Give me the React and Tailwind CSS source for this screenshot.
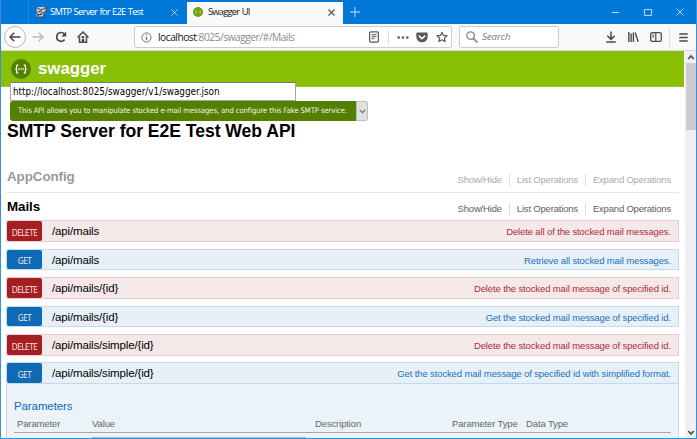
import React from 'react';

const operations = [
  { method: 'DELETE', path: '/api/mails', note: 'Delete all of the stocked mail messages.', size: 'h-[22px] mb-[7px]' },
  { method: 'GET', path: '/api/mails', note: 'Retrieve all stocked mail messages.', size: 'h-[21px] mb-[7px]' },
  { method: 'DELETE', path: '/api/mails/{id}', note: 'Delete the stocked mail message of specified id.', size: 'h-[22px] mb-[7px]' },
  { method: 'GET', path: '/api/mails/{id}', note: 'Get the stocked mail message of specified id.', size: 'h-[21px] mb-[7px]' },
  { method: 'DELETE', path: '/api/mails/simple/{id}', note: 'Delete the stocked mail message of specified id.', size: 'h-[22px] mb-[6px]' },
  { method: 'GET', path: '/api/mails/simple/{id}', note: 'Get the stocked mail message of specified id with simplified format.', size: 'h-[22px]' },
];

function Operation({ method, path, note, size }) {
  const del = method === 'DELETE';
  return (
    <div className={`flex shrink-0 items-stretch border pr-[7px] ${size} ${del ? 'border-[#edcacd] bg-[#f5e8e8]' : 'border-[#c3daee] bg-[#e7f0f7]'}`}>
      <div className={`flex w-[35px] items-center justify-center rounded-[2px] pt-[4px] font-['Open_Sans',sans-serif] text-[8.2px] leading-none tracking-[-0.45px] text-[#f6e8e8] ${del ? 'bg-[#a41e22]' : 'bg-[#0f6ab4]'}`}>{method}</div>
      <div className="ml-[10px] flex items-center pt-[2px] text-[11.5px] leading-none tracking-[-0.15px] text-black">{path}</div>
      <div className={`ml-auto flex items-center pt-[2px] text-[9.5px] leading-none tracking-[-0.13px] ${del ? 'text-[#b02c3a]' : 'text-[#2270bd]'}`}>{note}</div>
    </div>
  );
}

function Links({ className }) {
  return (
    <div className={`ml-auto flex items-center text-[9.5px] leading-none tracking-[-0.19px] ${className}`}>
      <span>Show/Hide</span>
      <span className="mx-[7px] h-[12px] w-px bg-[#dddddd]" />
      <span>List Operations</span>
      <span className="mx-[7px] h-[12px] w-px bg-[#dddddd]" />
      <span>Expand Operations</span>
    </div>
  );
}

function SwaggerMark({ className, fill, ink }) {
  return (
    <svg className={className} viewBox="0 0 20 20" fill="none">
      <circle cx="10" cy="10" r="10" fill={fill} />
      <path d="M7.2 5.8c-1.8 0-1.5 1-1.5 2.4S5 10 4.4 10c.6 0 1.3.5 1.3 1.8s-.3 2.4 1.5 2.4M12.8 5.8c1.8 0 1.5 1 1.5 2.4s.7 1.8 1.3 1.8c-.6 0-1.3.5-1.3 1.8s.3 2.4-1.5 2.4" stroke={ink} strokeWidth="1.3" />
      <path d="M7.3 10h1.3M9.4 10h1.3M11.5 10h1.3" stroke={ink} strokeWidth="1.4" />
    </svg>
  );
}

function TabBar() {
  return (
    <div className="flex h-[24px] shrink-0 bg-[#0078d7] font-['Open_Sans',sans-serif] text-[9.4px] leading-none">
      <div className="w-[27px]" />
      <div className="flex w-[159px] items-center border-l border-[#1c88dd] pl-[6px] pr-[9px] text-white">
        <svg className="h-[12px] w-[12px] shrink-0" viewBox="0 0 12 12" fill="none">
          <path d="M1 1h10v4.5l-3 2.5v3H1.5V8L3 6 1 5z" fill="#c9cdd0" />
          <path d="M1.5 1.5 6 4l5-2.5M3 6l4-1M1.5 10.5 7 7l4-1.5M2 8.5h5M9 8v3H2M1 1v4M11 1v5" stroke="#3c454b" strokeWidth="1" />
        </svg>
        <span className="ml-[3px] whitespace-nowrap font-medium tracking-[-0.74px] [word-spacing:0.5px]">SMTP Server for E2E Test</span>
        <svg className="ml-auto h-[7px] w-[7px]" viewBox="0 0 7 7"><path d="m.5.5 6 6m0-6-6 6" stroke="#a9d2f3" /></svg>
      </div>
      <div className="mt-[2px] flex w-[156px] items-center bg-[#f9f9fa] pb-[2px] pl-[6px] pr-[8px] text-[#151515]">
        <SwaggerMark className="h-[10px] w-[10px]" fill="#6b9c0a" ink="#d9edb5" />
        <span className="ml-[5px] font-medium tracking-[-0.82px] [word-spacing:1px]">Swagger UI</span>
        <svg className="ml-auto h-[7px] w-[7px]" viewBox="0 0 7 7"><path d="m.5.5 6 6m0-6-6 6" stroke="#5c5c5c" strokeWidth="1.3" /></svg>
      </div>
      <svg className="ml-[7px] mt-[7px] h-[10px] w-[10px]" viewBox="0 0 10 10"><path d="M5 0v10M0 5h10" stroke="#8fc4ef" strokeWidth="1.3" /></svg>
      <div className="ml-auto flex items-center pr-[12px]">
        <svg className="h-[8px] w-[72px]" viewBox="0 0 72 8" fill="none" stroke="#b9daf5">
          <path d="M0 4.5h7M64.5.5l7 7m0-7-7 7" />
          <path d="M32.5 1.5h7v6h-7z" />
        </svg>
      </div>
    </div>
  );
}

function Toolbar() {
  return (
    <div className="flex h-[27px] shrink-0 items-center border-b border-[#dedee0] bg-[#f9f9fa] pl-[3px] font-['Open_Sans',sans-serif] text-[#4a4a4c]">
      <div className="flex h-[22px] w-[22px] items-center justify-center rounded-full border border-[#b9b9ba] bg-[#fdfdfd]">
        <svg className="h-[10px] w-[12px]" viewBox="0 0 12 10" fill="none" stroke="currentColor" strokeWidth="1.6"><path d="M11.5 5H1.2M5.2.7 1 5l4.2 4.3" /></svg>
      </div>
      <svg className="ml-[6px] h-[10px] w-[12px] text-[#b9b9ba]" viewBox="0 0 12 10" fill="none" stroke="currentColor" strokeWidth="1.5"><path d="M.5 5h10.3M6.8.7 11 5 6.8 9.3" /></svg>
      <svg className="ml-[11px] h-[12px] w-[12px]" viewBox="0 0 12 12" fill="none"><path d="M9.6 8.5A4.4 4.4 0 1 1 9 2.6l1 1" stroke="currentColor" strokeWidth="1.7" /><path d="M11.2.4v5H6.3z" fill="currentColor" /></svg>
      <svg className="ml-[10px] h-[12px] w-[12px]" viewBox="0 0 12 12" fill="none"><path d="M.5 6.5 6 1l5.5 5.5" stroke="currentColor" strokeWidth="1.5" /><path d="M2.5 5.5v5.7h7V5.5M6 11V7.6" stroke="currentColor" strokeWidth="1.5" /><path d="M4.7 5h2.6v2H4.7zM4.7 8.2h2.6V11H4.7z" fill="currentColor" /></svg>
      <div className="ml-[45px] flex h-[22px] w-[318px] items-center rounded-[2px] border border-[#cccccd] bg-white pl-[6px] pr-[3px]">
        <svg className="h-[11px] w-[11px]" viewBox="0 0 11 11" fill="none" stroke="#737373"><circle cx="5.5" cy="5.5" r="4.6" /><path d="M5.5 4.8v3.4M5.5 2.6v1.2" strokeWidth="1.3" /></svg>
        <span className="ml-[6px] text-[10.3px] leading-none tracking-[-0.53px] text-[#8c8c8d]"><span className="text-[#161616]">localhost</span>:8025/swagger/#/Mails</span>
        <svg className="ml-auto h-[12px] w-[10px]" viewBox="0 0 10 12" fill="none" stroke="#58585a"><rect x=".6" y=".8" width="8.8" height="10.4" rx="1.2" strokeWidth="1.2" /><path d="M2.5 3.7h5M2.5 5.7h5M2.5 7.7h3" /></svg>
        <span className="ml-[9px] h-[15px] w-px bg-[#dcdcdd]" />
        <svg className="ml-[8px] h-[3px] w-[12px]" viewBox="0 0 12 3" fill="#58585a"><circle cx="1.7" cy="1.5" r="1.3" /><circle cx="6" cy="1.5" r="1.3" /><circle cx="10.3" cy="1.5" r="1.3" /></svg>
        <svg className="ml-[7px] h-[11px] w-[12px]" viewBox="0 0 12 11"><path d="M1.3.6h9.4q1 0 1 1v3.3a5.7 5.4 0 0 1-11.4 0V1.6q0-1 1-1z" fill="#58585a" /><path d="M3.3 4.1 6 6.7l2.7-2.6" fill="none" stroke="#fff" strokeWidth="1.5" strokeLinecap="round" /></svg>
        <svg className="ml-[8px] h-[12px] w-[12px]" viewBox="0 0 12 12" fill="none"><path d="m6 1.2 1.4 3.2 3.6.3-2.7 2.4.8 3.5L6 8.8l-3.1 1.8.8-3.5L1 4.7l3.6-.3z" stroke="#58585a" strokeWidth="1.2" strokeLinejoin="round" /></svg>
      </div>
      <div className="ml-[7px] flex h-[22px] w-[100px] items-center rounded-[2px] border border-[#cccccd] bg-white pl-[6px]">
        <svg className="h-[12px] w-[12px]" viewBox="0 0 12 12" fill="none" stroke="#858586"><circle cx="4.6" cy="4.6" r="3.8" strokeWidth="1.3" /><path d="m7.4 7.4 4 4" strokeWidth="1.6" /></svg>
        <span className="ml-[4px] text-[9.7px] italic leading-none tracking-[-0.1px] text-[#767677]">Search</span>
      </div>
      <svg className="ml-[47px] h-[12px] w-[10px]" viewBox="0 0 10 12" fill="none" stroke="currentColor" strokeWidth="1.5"><path d="M5 .5v7.8M1.3 4.7 5 8.4l3.7-3.7M.3 10.9h9.4" /></svg>
      <svg className="ml-[12px] h-[10px] w-[11px]" viewBox="0 0 11 10" fill="none" stroke="currentColor" strokeWidth="1.4"><path d="M.8 0v10M3.1 1.5V10M5.4.5V10" /><path d="m7.2.5 3 9.3" /></svg>
      <svg className="ml-[11px] h-[10px] w-[12px]" viewBox="0 0 12 10" fill="none" stroke="currentColor"><rect x=".7" y=".7" width="10.6" height="8.6" rx="1.6" strokeWidth="1.3" /><path d="M5.8 1v8" strokeWidth="1.2" /><path d="M2.2 3h2M2.2 5h2" /></svg>
      <span className="ml-[7px] h-[20px] w-px bg-[#dedee0]" />
      <svg className="ml-[9px] h-[9px] w-[9px]" viewBox="0 0 9 9" stroke="currentColor" strokeWidth="1.4"><path d="M.3 1h8.4M.3 4.5h8.4M.3 8h8.4" /></svg>
    </div>
  );
}

function Scrollbar() {
  return (
    <div className="flex w-[12px] shrink-0 flex-col items-center border-l border-white bg-[#f0f0f0]">
      <svg className="h-[12px] w-[8px] shrink-0" viewBox="0 0 8 12" fill="none"><path d="m1.3 8 2.7-3 2.7 3" stroke="#505050" strokeWidth="1.7" /></svg>
      <div className="h-[67px] w-[10px] bg-[#cdcdcd]" />
      <svg className="mt-auto h-[11px] w-[8px] shrink-0" viewBox="0 0 8 11" fill="none"><path d="m1.3 4 2.7 3 2.7-3" stroke="#505050" strokeWidth="1.7" /></svg>
    </div>
  );
}

function Page() {
  return (
    <div className="flex min-w-0 flex-1 flex-col overflow-hidden bg-white">
      <header className="flex h-[36px] shrink-0 items-center border-b border-[#9ac92f] bg-[#89bf04] pl-[10px] pt-px">
        <SwaggerMark className="h-[20px] w-[20px]" fill="#547f00" ink="#ffffff" />
        <span className="ml-[7px] text-[16.8px] font-bold leading-none text-white">swagger</span>
      </header>
      <div className="relative z-10 -mt-[5px] ml-[9px] flex h-[19px] w-[286px] shrink-0 items-center border border-[#a5a5a5] border-t-[#777777] bg-white pl-[2px] font-['DejaVu_Sans_Condensed','DejaVu_Sans',sans-serif] text-[9.8px] leading-none text-black [font-stretch:condensed]">
        http://localhost:8025/swagger/v1/swagger.json
      </div>
      <div className="ml-[9px] flex h-[20px] w-[358px] shrink-0">
        <div className="flex flex-1 items-center whitespace-nowrap rounded-l-[3px] bg-[#547f00] pl-[8px] font-['DejaVu_Sans_Condensed','DejaVu_Sans',sans-serif] text-[7.6px] leading-none tracking-[-0.08px] text-[#f1f5e8] [font-stretch:condensed]">
          This API allows you to manipulate stocked e-mail messages, and configure this Fake SMTP service.
        </div>
        <div className="flex w-[12px] items-center justify-center rounded-r-[2px] border border-[#bdbdbd] bg-[#e1e1e1]">
          <svg className="h-[5px] w-[7px]" viewBox="0 0 7 5" fill="none"><path d="m.8 1 2.7 2.7L6.2 1" stroke="#707070" strokeWidth="1.2" /></svg>
        </div>
      </div>
      <h1 className="ml-[6px] h-[20px] shrink-0 whitespace-nowrap text-[17.6px] font-bold leading-[20px] tracking-[-0.04px] text-black">SMTP Server for E2E Test Web API</h1>
      <main className="ml-[5px] mr-[5px] mt-[26px] flex flex-1 flex-col">
        <div className="flex h-[26px] shrink-0 items-center border-b border-[#e6e6e6] pb-[5px] pl-px pr-[8px]">
          <h2 className="text-[13.4px] font-bold leading-none tracking-[-0.08px] text-[#999999]">AppConfig</h2>
          <Links className="pt-[5px] text-[#aaaaaa]" />
        </div>
        <div className="flex h-[27px] shrink-0 items-center pl-px pr-[8px] pt-px">
          <h2 className="text-[13.4px] font-bold leading-none tracking-[-0.08px] text-black">Mails</h2>
          <Links className="pt-[3px] text-[#606060]" />
        </div>
        {operations.map((op, i) => <Operation key={i} {...op} />)}
        <section className="flex-1 border-x border-[#c3daee] bg-[#ebf3f9] px-[7px] pt-[16px]">
          <h3 className="text-[11.5px] leading-[13px] tracking-[-0.1px] text-[#0f6ab4]">Parameters</h3>
          <div className="mt-[4px] flex h-[16px] items-center border-b border-[#a5a8aa] pb-px pl-[3px] text-[9.5px] leading-none tracking-[-0.13px] text-[#666666]">
            <span className="w-[75px]">Parameter</span>
            <span className="w-[223px]">Value</span>
            <span className="w-[137px]">Description</span>
            <span className="w-[74px] whitespace-nowrap">Parameter Type</span>
            <span>Data Type</span>
          </div>
          <div className="ml-[78px] mt-[4px] h-[10px] w-[214px] border border-[#b5b5b5] bg-white" />
        </section>
      </main>
    </div>
  );
}

export default function App() {
  return (
    <div className="flex h-[439px] w-[697px] flex-col overflow-hidden border-x border-b border-[#3392df] bg-white font-['Liberation_Sans',Arial,sans-serif]">
      <TabBar />
      <Toolbar />
      <div className="flex min-h-0 flex-1">
        <Page />
        <Scrollbar />
      </div>
    </div>
  );
}
